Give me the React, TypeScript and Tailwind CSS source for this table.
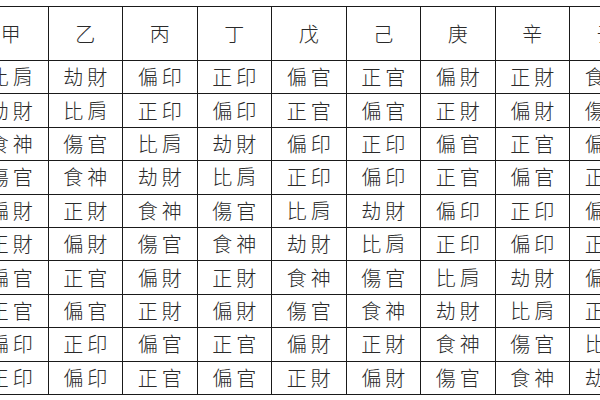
import React from "react"

const HEADER = ["甲", "乙", "丙", "丁", "戊", "己", "庚", "辛", "壬"]

const ROWS: string[][] = [
  ["比肩", "劫財", "偏印", "正印", "偏官", "正官", "偏財", "正財", "食神"],
  ["劫財", "比肩", "正印", "偏印", "正官", "偏官", "正財", "偏財", "傷官"],
  ["食神", "傷官", "比肩", "劫財", "偏印", "正印", "偏官", "正官", "偏財"],
  ["傷官", "食神", "劫財", "比肩", "正印", "偏印", "正官", "偏官", "正財"],
  ["偏財", "正財", "食神", "傷官", "比肩", "劫財", "偏印", "正印", "偏官"],
  ["正財", "偏財", "傷官", "食神", "劫財", "比肩", "正印", "偏印", "正官"],
  ["偏官", "正官", "偏財", "正財", "食神", "傷官", "比肩", "劫財", "偏印"],
  ["正官", "偏官", "正財", "偏財", "傷官", "食神", "劫財", "比肩", "正印"],
  ["偏印", "正印", "偏官", "正官", "偏財", "正財", "食神", "傷官", "比肩"],
  ["正印", "偏印", "正官", "偏官", "正財", "偏財", "傷官", "食神", "劫財"],
]

export default function App() {
  return (
    <div
      className="w-[600px] h-[400px] overflow-hidden bg-white text-[#2a2a2a]"
      style={{ fontFamily: '"Noto Sans CJK TC", "Noto Sans CJK SC", sans-serif' }}
    >
      <div className="ml-[-27px] mt-[6px] w-max grid grid-cols-[repeat(9,74.5px)] grid-rows-[54px_repeat(10,33.4px)] border-l border-t border-[#1a1a1a]">
        {HEADER.map((h) => (
          <div
            key={h}
            className="flex items-center justify-center border-r border-b border-[#1a1a1a] text-[20px] font-light"
          >
            {h}
          </div>
        ))}
        {ROWS.map((row, i) =>
          row.map((cell, j) => (
            <div
              key={`${i}-${j}`}
              className="flex items-center justify-center border-r border-b border-[#1a1a1a] text-[20px] font-light tracking-[4px] pl-[4px] leading-none"
            >
              {cell}
            </div>
          ))
        )}
      </div>
    </div>
  )
}
